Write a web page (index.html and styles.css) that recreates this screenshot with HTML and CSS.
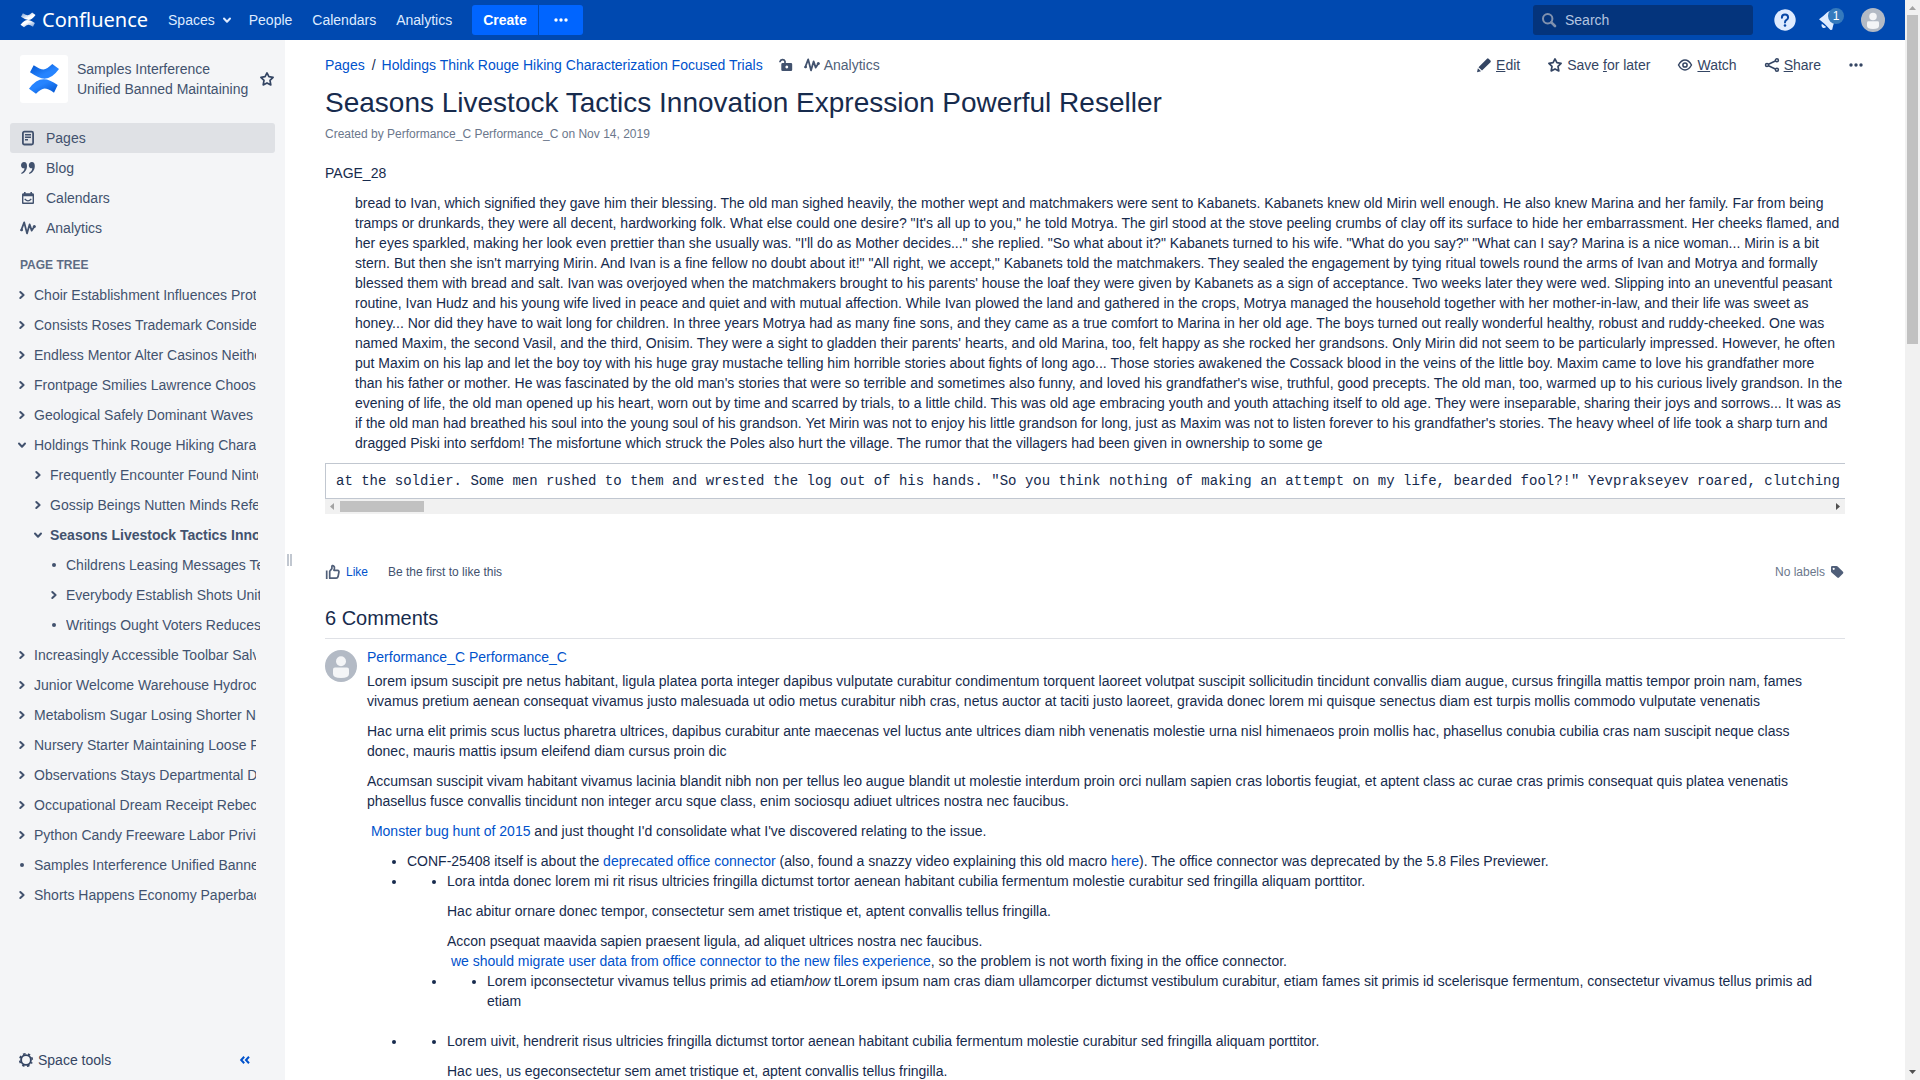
FILE: index.html
```html
<!DOCTYPE html>
<html lang="en">
<head>
<meta charset="utf-8">
<title>Seasons Livestock Tactics Innovation Expression Powerful Reseller - Confluence</title>
<link rel="stylesheet" href="styles.css">
</head>
<body>
<svg class="sprite" aria-hidden="true">
  <defs>
    <linearGradient id="blueTop" x1="1" y1="1" x2="0" y2="0"><stop offset="0.4" stop-color="#2684ff"/><stop offset="1" stop-color="#0052cc"/></linearGradient>
    <linearGradient id="blueBottom" x1="0" y1="0" x2="1" y2="1"><stop offset="0.4" stop-color="#2684ff"/><stop offset="1" stop-color="#0052cc"/></linearGradient>
    <linearGradient id="whiteTop" x1="1" y1="1" x2="0" y2="0"><stop offset="0.4" stop-color="#fff"/><stop offset="1" stop-color="#fff" stop-opacity="0.4"/></linearGradient>
    <linearGradient id="whiteBottom" x1="0" y1="0" x2="1" y2="1"><stop offset="0.4" stop-color="#fff"/><stop offset="1" stop-color="#fff" stop-opacity="0.4"/></linearGradient>
    <symbol id="chev-right" viewBox="0 0 10 10"><path d="M3.3 2L6.6 5L3.3 8" fill="none" stroke="currentColor" stroke-width="2" stroke-linecap="round" stroke-linejoin="round"/></symbol>
    <symbol id="chev-down" viewBox="0 0 10 10"><path d="M2 3.5L5 6.7L8 3.5" fill="none" stroke="currentColor" stroke-width="2" stroke-linecap="round" stroke-linejoin="round"/></symbol>
    <symbol id="dot" viewBox="0 0 10 10"><circle cx="5" cy="5" r="2" fill="currentColor"/></symbol>
    <symbol id="dots" viewBox="0 0 16 16"><g fill="currentColor"><circle cx="3" cy="8" r="1.7"/><circle cx="8" cy="8" r="1.7"/><circle cx="13" cy="8" r="1.7"/></g></symbol>
    <symbol id="star" viewBox="0 0 16 16"><path d="M8 1.9L9.9 5.7L14.1 6.3L11 9.3L11.8 13.9L8 11.9L4.2 13.9L5 9.3L1.9 6.3L6.1 5.7Z" fill="none" stroke="currentColor" stroke-width="1.7" stroke-linejoin="round"/></symbol>
    <symbol id="analytics" viewBox="0 0 16 16"><path d="M1.2 10.2L4.2 2.4L7 13.4L9.6 4.4L11.7 10.6L14.4 6.4" fill="none" stroke="currentColor" stroke-width="1.8" stroke-linecap="round" stroke-linejoin="round"/><circle cx="1.7" cy="10" r="1.3" fill="currentColor"/><circle cx="14.3" cy="6.4" r="1.5" fill="currentColor"/></symbol>
    <symbol id="page" viewBox="0 0 16 16"><rect x="2.9" y="1.7" width="10.2" height="12.8" rx="1.5" fill="none" stroke="currentColor" stroke-width="1.8"/><path d="M5 4.7H11M5 7.2H11M5 9.7H8" stroke="currentColor" stroke-width="1.5" fill="none"/></symbol>
    <symbol id="quote" viewBox="0 0 16 16"><path d="M4 2C6.2 2 7.2 4 7 6.6C6.7 10.4 4.5 13.3 1.6 14L1.2 13C3.2 12 4.3 10.4 4.5 8.3C2.5 8.7 1 7.2 1 5.2C1 3.3 2.3 2 4 2ZM11.8 2C14 2 15 4 14.8 6.6C14.5 10.4 12.3 13.3 9.4 14L9 13C11 12 12.1 10.4 12.3 8.3C10.3 8.7 8.8 7.2 8.8 5.2C8.8 3.3 10.1 2 11.8 2Z" fill="currentColor"/></symbol>
    <symbol id="calendar" viewBox="0 0 16 16"><path d="M4 2H5.6V3.2H10.4V2H12V3.2H13A1.2 1.2 0 0 1 14 4.4V13A1 1 0 0 1 13 14H3A1 1 0 0 1 2 13V4.4A1.2 1.2 0 0 1 3 3.2H4ZM3.4 6.3V12.6H12.6V6.3Z" fill="currentColor" fill-rule="evenodd"/><path d="M4.7 8.8Q8 12.8 11.3 8.8" fill="none" stroke="currentColor" stroke-width="1.3"/></symbol>
    <symbol id="unlock" viewBox="0 0 16 16"><path d="M2 5.200V4.600A2.600 2.600 0 0 1 7 4.300V8" fill="none" stroke="currentColor" stroke-width="1.700"/><path d="M4.600 6H13A1.300 1.300 0 0 1 14.200 7.200V12.800A1.300 1.300 0 0 1 13 14.100H4.600A1.300 1.300 0 0 1 3.300 12.800V7.200A1.300 1.300 0 0 1 4.600 6ZM8.800 8.600A1.400 1.400 0 1 0 8.810 8.600Z" fill="currentColor" fill-rule="evenodd"/></symbol>
    <symbol id="pencil" viewBox="0 0 16 16"><path d="M11 1.700Q11.800 1 12.600 1.700L14.500 3.600Q15.200 4.400 14.500 5.200L6 13.600L2.500 10.200ZM1.900 11.200L5 14.300L1 15.200Z" fill="currentColor"/></symbol>
    <symbol id="eye" viewBox="0 0 16 16"><path d="M1.500 8Q4.300 3 8 3T14.500 8Q11.700 13 8 13T1.500 8Z" fill="none" stroke="currentColor" stroke-width="1.500" stroke-linejoin="round"/><circle cx="8" cy="8" r="2.100" fill="none" stroke="currentColor" stroke-width="1.500"/></symbol>
    <symbol id="share" viewBox="0 0 16 16"><g fill="none" stroke="currentColor" stroke-width="1.500"><path d="M4.500 7.200L11.300 4M4.500 8.800L11.300 12"/><circle cx="3" cy="8" r="1.500"/><circle cx="12.900" cy="3.300" r="1.500"/><circle cx="12.900" cy="12.700" r="1.500"/></g></symbol>
    <symbol id="search" viewBox="0 0 16 16"><circle cx="6.700" cy="6.700" r="4.700" fill="none" stroke="currentColor" stroke-width="2"/><path d="M10.300 10.300L14 14" stroke="currentColor" stroke-width="2.600" stroke-linecap="round"/></symbol>
    <symbol id="like" viewBox="0 0 16 16"><path d="M1.700 6.500V15" stroke="currentColor" stroke-width="1.700"/><path d="M4.700 7.300L6.900 4.600V2.300Q7.200 1.300 8.300 1.700Q9.900 2.500 9.300 5L8.900 6.300H12.500Q14.300 6.500 13.900 8.300L13 12.800Q12.600 14.200 11.200 14.200H4.700Z" fill="none" stroke="currentColor" stroke-width="1.700" stroke-linejoin="round"/></symbol>
    <symbol id="tag" viewBox="0 0 16 16"><path d="M2 3.200Q2 2 3.200 2H7.500Q8.200 2 8.700 2.500L14 7.800Q14.800 8.700 14 9.500L10 13.600Q9.100 14.300 8.300 13.600L2.600 8.400Q2 7.900 2 7.200ZM4.700 3.700A1.100 1.100 0 1 0 4.710 3.700Z" fill="currentColor" fill-rule="evenodd"/></symbol>
    <symbol id="gear" viewBox="0 0 16 16"><circle cx="8" cy="8" r="4.900" fill="none" stroke="currentColor" stroke-width="1.900"/><circle cx="8" cy="8" r="6.300" fill="none" stroke="currentColor" stroke-width="1.600" stroke-dasharray="2.480 2.468" stroke-dashoffset="1.200" transform="rotate(22.500 8 8)"/></symbol>
    <symbol id="collapse" viewBox="0 0 16 16"><path d="M7.200 4.800L4.200 8L7.200 11.200M12 4.800L9 8L12 11.200" fill="none" stroke="currentColor" stroke-width="2"/></symbol>
    <symbol id="help" viewBox="0 0 24 24"><circle cx="12" cy="12" r="10.700" fill="#deebff"/><path d="M8.900 9.700Q8.900 6.500 12 6.500T15.100 9.400Q15.100 10.900 13.500 11.900T12 14.400" fill="none" stroke="#0747a6" stroke-width="2" stroke-linecap="round"/><circle cx="12" cy="17.500" r="1.300" fill="#0747a6"/></symbol>
    <symbol id="horn" viewBox="0 0 24 24"><g fill="#deebff"><path d="M2 11.200Q6 8.500 10.300 4.200L12.500 3L19.500 14L17 15Q15.800 18 15.200 21.800L13.500 22Q8.500 16 2 11.200Z"/><path d="M4.800 15.800L9.200 18.900Q7.500 20.700 5.600 19.700Q3.800 18.200 4.800 15.800Z"/></g></symbol>
    <symbol id="avatar" viewBox="0 0 32 32"><circle cx="16" cy="16" r="16" fill="#b3bac5"/><circle cx="16" cy="11.300" r="5" fill="#f4f5f7"/><path d="M8 19.300Q8 17.500 10 17.500H22Q24 17.500 24 19.300V24Q24 28 16 28T8 24Z" fill="#f4f5f7"/></symbol>
  </defs>
</svg>
<div class="window">
  <div class="app">
    <header class="header">
      <a class="brand" href="#">
        <svg class="brand-mark" viewBox="0 0 32 32"><path d="M5.700 2.300Q12 6.500 15.500 6.500Q19 6 24.300 1L31 6Q24 16 16.500 16Q11 15.500 2 9.300Z" fill="url(#whiteTop)"/><path d="M1 25.700Q8 16 15.500 16Q21 16 29.700 22L26 29.700Q20 25.500 16.500 25.500Q13 26 8 30.700Z" fill="url(#whiteBottom)"/></svg>
        <span>Confluence</span>
      </a>
      <nav class="topnav" aria-label="Site">
        <a href="#" class="with-arrow">Spaces<svg class="i10"><use href="#chev-down"/></svg></a>
        <a href="#">People</a>
        <a href="#">Calendars</a>
        <a href="#">Analytics</a>
      </nav>
      <div class="create">
        <button type="button">Create</button>
        <button type="button" aria-label="Create from template"><svg class="i16"><use href="#dots"/></svg></button>
      </div>
      <div class="header-right">
        <label class="search"><svg class="i16"><use href="#search"/></svg><input type="search" placeholder="Search" aria-label="Search"></label>
        <a href="#" class="header-icon" aria-label="Help"><svg class="i24"><use href="#help"/></svg></a>
        <a href="#" class="header-icon" aria-label="Notifications"><svg class="i24"><use href="#horn"/></svg><span class="badge">1</span></a>
        <a href="#" class="header-icon" aria-label="Profile"><svg class="i24"><use href="#avatar"/></svg></a>
      </div>
    </header>
    <div class="body">
      <aside class="sidebar">
        <div class="space">
          <span class="space-logo"><svg viewBox="0 0 32 32"><path d="M5.700 2.300Q12 6.500 15.500 6.500Q19 6 24.300 1L31 6Q24 15.700 16.500 15.700Q11 15.500 2 9.300Z" fill="url(#blueTop)"/><path d="M1 25.700Q8 16.300 15.500 16.300Q21 16 29.700 22L26 29.700Q20 25.500 16.500 25.500Q13 26 8 30.700Z" fill="url(#blueBottom)"/></svg></span>
          <a href="#" class="space-name">Samples Interference Unified Banned Maintaining</a>
          <button type="button" class="plain" aria-label="Favourite space"><svg class="i16"><use href="#star"/></svg></button>
        </div>
        <nav class="sidenav" aria-label="Space">
          <a href="#" class="active"><svg class="i16"><use href="#page"/></svg>Pages</a>
          <a href="#"><svg class="i16"><use href="#quote"/></svg>Blog</a>
          <a href="#"><svg class="i16"><use href="#calendar"/></svg>Calendars</a>
          <a href="#"><svg class="i16"><use href="#analytics"/></svg>Analytics</a>
        </nav>
        <h2 class="tree-title">PAGE TREE</h2>
        <ul class="tree">
          <li><a href="#"><svg class="i10"><use href="#chev-right"/></svg><span>Choir Establishment Influences Protection</span></a></li>
          <li><a href="#"><svg class="i10"><use href="#chev-right"/></svg><span>Consists Roses Trademark Considered</span></a></li>
          <li><a href="#"><svg class="i10"><use href="#chev-right"/></svg><span>Endless Mentor Alter Casinos Neither</span></a></li>
          <li><a href="#"><svg class="i10"><use href="#chev-right"/></svg><span>Frontpage Smilies Lawrence Choose</span></a></li>
          <li><a href="#"><svg class="i10"><use href="#chev-right"/></svg><span>Geological Safely Dominant Waves</span></a></li>
          <li><a href="#"><svg class="i10"><use href="#chev-down"/></svg><span>Holdings Think Rouge Hiking Characterization</span></a>
            <ul>
              <li><a href="#"><svg class="i10"><use href="#chev-right"/></svg><span>Frequently Encounter Found Nintendo</span></a></li>
              <li><a href="#"><svg class="i10"><use href="#chev-right"/></svg><span>Gossip Beings Nutten Minds Reference</span></a></li>
              <li><a href="#" class="current"><svg class="i10"><use href="#chev-down"/></svg><span>Seasons Livestock Tactics Innovation</span></a>
                <ul>
                  <li><a href="#"><svg class="i10"><use href="#dot"/></svg><span>Childrens Leasing Messages Text</span></a></li>
                  <li><a href="#"><svg class="i10"><use href="#chev-right"/></svg><span>Everybody Establish Shots United</span></a></li>
                  <li><a href="#"><svg class="i10"><use href="#dot"/></svg><span>Writings Ought Voters Reduces</span></a></li>
                </ul>
              </li>
            </ul>
          </li>
          <li><a href="#"><svg class="i10"><use href="#chev-right"/></svg><span>Increasingly Accessible Toolbar Salvation</span></a></li>
          <li><a href="#"><svg class="i10"><use href="#chev-right"/></svg><span>Junior Welcome Warehouse Hydrocodone</span></a></li>
          <li><a href="#"><svg class="i10"><use href="#chev-right"/></svg><span>Metabolism Sugar Losing Shorter Nominations</span></a></li>
          <li><a href="#"><svg class="i10"><use href="#chev-right"/></svg><span>Nursery Starter Maintaining Loose Funding</span></a></li>
          <li><a href="#"><svg class="i10"><use href="#chev-right"/></svg><span>Observations Stays Departmental Data</span></a></li>
          <li><a href="#"><svg class="i10"><use href="#chev-right"/></svg><span>Occupational Dream Receipt Rebecca</span></a></li>
          <li><a href="#"><svg class="i10"><use href="#chev-right"/></svg><span>Python Candy Freeware Labor Privileges</span></a></li>
          <li><a href="#"><svg class="i10"><use href="#dot"/></svg><span>Samples Interference Unified Banned</span></a></li>
          <li><a href="#"><svg class="i10"><use href="#chev-right"/></svg><span>Shorts Happens Economy Paperback</span></a></li>
        </ul>
        <div class="side-foot">
          <button type="button" class="plain"><svg class="i16"><use href="#gear"/></svg>Space tools</button>
          <button type="button" class="plain collapse" aria-label="Collapse sidebar"><svg class="i16"><use href="#collapse"/></svg></button>
        </div>
      </aside>
      <div class="resize-handle"></div>
      <main class="main">
        <div class="toolbar">
          <nav class="crumbs" aria-label="Breadcrumb">
            <a href="#">Pages</a><span class="sep">/</span><a href="#">Holdings Think Rouge Hiking Characterization Focused Trials</a>
            <a href="#" class="muted lock" aria-label="Unrestricted"><svg class="i16"><use href="#unlock"/></svg></a>
            <a href="#" class="muted"><svg class="i16"><use href="#analytics"/></svg>Analytics</a>
          </nav>
          <div class="actions">
            <button type="button" class="plain"><svg class="i16"><use href="#pencil"/></svg><span><u>E</u>dit</span></button>
            <button type="button" class="plain"><svg class="i16"><use href="#star"/></svg><span>Save <u>f</u>or later</span></button>
            <button type="button" class="plain"><svg class="i16"><use href="#eye"/></svg><span><u>W</u>atch</span></button>
            <button type="button" class="plain"><svg class="i16"><use href="#share"/></svg><span><u>S</u>hare</span></button>
            <button type="button" class="plain" aria-label="More actions"><svg class="i16"><use href="#dots"/></svg></button>
          </div>
        </div>
        <article class="content">
          <h1>Seasons Livestock Tactics Innovation Expression Powerful Reseller</h1>
          <p class="byline">Created by Performance_C Performance_C on Nov 14, 2019</p>
          <p>PAGE_28</p>
          <p class="indent">bread to Ivan, which signified they gave him their blessing. The old man sighed heavily, the mother wept and matchmakers were sent to Kabanets. Kabanets knew old Mirin well enough. He also knew Marina and her family. Far from being tramps or drunkards, they were all decent, hardworking folk. What else could one desire? "It's all up to you," he told Motrya. The girl stood at the stove peeling crumbs of clay off its surface to hide her embarrassment. Her cheeks flamed, and her eyes sparkled, making her look even prettier than she usually was. "I'll do as Mother decides..." she replied. "So what about it?" Kabanets turned to his wife. "What do you say?" "What can I say? Marina is a nice woman... Mirin is a bit stern. But then she isn't marrying Mirin. And Ivan is a fine fellow no doubt about it!" "All right, we accept," Kabanets told the matchmakers. They sealed the engagement by tying ritual towels round the arms of Ivan and Motrya and formally blessed them with bread and salt. Ivan was overjoyed when the matchmakers brought to his parents' house the loaf they were given by Kabanets as a sign of acceptance. Two weeks later they were wed. Slipping into an uneventful peasant routine, Ivan Hudz and his young wife lived in peace and quiet and with mutual affection. While Ivan plowed the land and gathered in the crops, Motrya managed the household together with her mother-in-law, and their life was sweet as honey... Nor did they have to wait long for children. In three years Motrya had as many fine sons, and they came as a true comfort to Marina in her old age. The boys turned out really wonderful healthy, robust and ruddy-cheeked. One was named Maxim, the second Vasil, and the third, Onisim. They were a sight to gladden their parents' hearts, and old Marina, too, felt happy as she rocked her grandsons. Only Mirin did not seem to be particularly impressed. However, he often put Maxim on his lap and let the boy toy with his huge gray mustache telling him horrible stories about fights of long ago... Those stories awakened the Cossack blood in the veins of the little boy. Maxim came to love his grandfather more than his father or mother. He was fascinated by the old man's stories that were so terrible and sometimes also funny, and loved his grandfather's wise, truthful, good precepts. The old man, too, warmed up to his curious lively grandson. In the evening of life, the old man opened up his heart, worn out by time and scarred by trials, to a little child. This was old age embracing youth and youth attaching itself to old age. They were inseparable, sharing their joys and sorrows... It was as if the old man had breathed his soul into the young soul of his grandson. Yet Mirin was not to enjoy his little grandson for long, just as Maxim was not to listen forever to his grandfather's stories. The heavy wheel of life took a sharp turn and dragged Piski into serfdom! The misfortune which struck the Poles also hurt the village. The rumor that the villagers had been given in ownership to some ge</p>
          <div class="code">
            <pre>at the soldier. Some men rushed to them and wrested the log out of his hands. "So you think nothing of making an attempt on my life, bearded fool?!" Yevprakseyev roared, clutching</pre>
            <div class="hbar">
              <svg class="i15" viewBox="0 0 15 15"><path d="M9 4V11L5 7.500Z" fill="#a3a3a3"/></svg>
              <span class="hthumb"></span>
              <svg class="i15 hend" viewBox="0 0 15 15"><path d="M6 4V11L10 7.500Z" fill="#505050"/></svg>
            </div>
          </div>
          <div class="likes">
            <a href="#" class="like"><svg class="i16"><use href="#like"/></svg>Like</a>
            <span>Be the first to like this</span>
            <span class="labels">No labels<a href="#" aria-label="Edit labels"><svg class="i16"><use href="#tag"/></svg></a></span>
          </div>
          <h2 class="comments-title">6 Comments</h2>
          <section class="comment">
            <svg class="i32"><use href="#avatar"/></svg>
            <div class="comment-body">
              <a href="#" class="author">Performance_C Performance_C</a>
              <p>Lorem ipsum suscipit pre netus habitant, ligula platea porta integer dapibus vulputate curabitur condimentum torquent laoreet volutpat suscipit sollicitudin tincidunt convallis diam augue, cursus fringilla mattis tempor proin nam, fames vivamus pretium aenean consequat vivamus justo malesuada ut odio metus curabitur nibh cras, netus auctor at taciti justo laoreet, gravida donec lorem mi quisque senectus diam est turpis mollis commodo vulputate venenatis</p>
              <p>Hac urna elit primis scus luctus pharetra ultrices, dapibus curabitur ante maecenas vel luctus ante ultrices diam nibh venenatis molestie urna nisl himenaeos proin mollis hac, phasellus conubia cubilia cras nam suscipit neque class donec, mauris mattis ipsum eleifend diam cursus proin dic</p>
              <p>Accumsan suscipit vivam habitant vivamus lacinia blandit nibh non per tellus leo augue blandit ut molestie interdum proin orci nullam sapien cras lobortis feugiat, et aptent class ac curae cras primis consequat quis platea venenatis phasellus fusce convallis tincidunt non integer arcu sque class, enim sociosqu adiuet ultrices nostra nec faucibus.</p>
              <p>&nbsp;<a href="#">Monster bug hunt of 2015</a> and just thought I'd consolidate what I've discovered relating to the issue.</p>
              <ul>
                <li>CONF-25408 itself is about the <a href="#">deprecated office connector</a> (also, found a snazzy video explaining this old macro <a href="#">here</a>). The office connector was deprecated by the 5.8 Files Previewer.</li>
                <li>
                  <ul>
                    <li>Lora intda donec lorem mi rit risus ultricies fringilla dictumst tortor aenean habitant cubilia fermentum molestie curabitur sed fringilla aliquam porttitor.
                      <p>Hac abitur ornare donec tempor, consectetur sem amet tristique et, aptent convallis tellus fringilla.</p>
                      <p>Accon psequat maavida sapien praesent ligula, ad aliquet ultrices nostra nec faucibus.<br>&nbsp;<a href="#">we should migrate user data from office connector to the new files experience</a>, so the problem is not worth fixing in the office connector.</p>
                    </li>
                    <li>
                      <ul>
                        <li>Lorem ipconsectetur vivamus tellus primis ad etiam<em>how</em> tLorem ipsum nam cras diam ullamcorper dictumst vestibulum curabitur, etiam fames sit primis id scelerisque fermentum, consectetur vivamus tellus primis ad etiam<br><br></li>
                      </ul>
                    </li>
                  </ul>
                </li>
                <li>
                  <ul>
                    <li>Lorem uivit, hendrerit risus ultricies fringilla dictumst tortor aenean habitant cubilia fermentum molestie curabitur sed fringilla aliquam porttitor.
                      <p>Hac ues, us egeconsectetur sem amet tristique et, aptent convallis tellus fringilla.</p>
                    </li>
                  </ul>
                </li>
              </ul>
            </div>
          </section>
        </article>
      </main>
    </div>
  </div>
  <div class="vbar">
    <svg class="i15" viewBox="0 0 15 15"><path d="M4 10H11L7.500 6Z" fill="#a3a3a3"/></svg>
    <span class="vthumb"></span>
    <svg class="i15 vend" viewBox="0 0 15 15"><path d="M4 5H11L7.500 9Z" fill="#505050"/></svg>
  </div>
</div>
</body>
</html>
```
FILE: styles.css
```css
* { box-sizing: border-box; }
body {
  margin: 0;
  font: 14px/20px "Liberation Sans", Arial, sans-serif;
  color: #172b4d;
  background: #fff;
}
a { color: #0052cc; text-decoration: none; }
button, input { font: inherit; color: inherit; border: 0; margin: 0; }
p, h1, h2, ul, pre { margin: 0; padding: 0; }
svg { display: block; flex: none; }
.sprite { position: absolute; width: 0; height: 0; }
.i10 { width: 10px; height: 10px; }
.i15 { width: 15px; height: 15px; }
.i16 { width: 16px; height: 16px; }
.i24 { width: 24px; height: 24px; }
.i32 { width: 32px; height: 32px; }

.window { display: flex; height: 100vh; overflow: hidden; }
.app { flex: 1; min-width: 0; display: flex; flex-direction: column; }
.body { flex: 1; min-height: 0; display: flex; }

/* Header */
.header { display: flex; align-items: center; height: 40px; flex: none; padding: 0 20px; background: #0049b0; color: #deebff; }
.header a { color: #deebff; }
.brand { display: flex; align-items: center; gap: 6px; font: 20px/30px "Noto Sans", sans-serif; margin-right: 10px; }
.header .brand { color: #fff; }
.brand-mark { width: 16px; height: 16px; }
.topnav { display: flex; }
.topnav a { padding: 5px 10px; }
.topnav .with-arrow { display: flex; align-items: center; gap: 7px; padding-right: 7px; }
.create { display: flex; gap: 1px; margin-left: 10px; }
.create button { display: flex; align-items: center; justify-content: center; height: 30px; padding: 0 11px; background: #0065ff; color: #fff; font-weight: bold; border-radius: 3px 0 0 3px; }
.create button + button { padding: 0 14px; border-radius: 0 3px 3px 0; }
.header-right { display: flex; align-items: center; gap: 20px; margin-left: auto; }
.search { display: flex; align-items: center; gap: 8px; width: 220px; height: 30px; padding: 0 8px; background: #04347c; border-radius: 3px; color: #8091ae; }
.search input { flex: 1; min-width: 0; padding: 0; background: none; outline: none; color: #deebff; }
.search input::placeholder { color: #b3c4e0; opacity: 1; }
.header-icon { position: relative; }
.badge { position: absolute; top: 0; right: -3px; width: 16px; height: 16px; border-radius: 8px; background: #357abd; color: #fff; font-size: 12px; line-height: 16px; text-align: center; }

/* Sidebar */
.sidebar { width: 285px; flex: none; display: flex; flex-direction: column; background: #f4f5f7; color: #42526e; }
.sidebar a { color: #42526e; }
.plain { display: flex; align-items: center; gap: 4px; padding: 0; background: none; color: #344563; }
.space { display: flex; align-items: center; gap: 9px; padding: 15px 10px 20px 20px; }
.space-logo { display: flex; align-items: center; justify-content: center; width: 48px; height: 48px; flex: none; background: #fff; border-radius: 3px; }
.space-logo svg { width: 32px; height: 32px; }
.space-name { flex: 1; }
.sidenav { padding: 0 10px; }
.sidenav a { display: flex; align-items: center; gap: 10px; height: 30px; padding: 0 10px; border-radius: 3px; }
.sidenav .active { background: #dfe1e5; }
.tree-title { padding: 12px 20px 5px; font-size: 12px; line-height: 20px; color: #5e6c84; }
.tree { list-style: none; padding: 0 29px 0 17px; }
.tree ul { list-style: none; padding-left: 16px; margin-right: -2px; }
.tree a { display: flex; align-items: center; gap: 7px; height: 30px; }
.tree span { overflow: hidden; white-space: nowrap; }
.tree .current { font-weight: bold; }
.side-foot { display: flex; align-items: center; justify-content: space-between; margin-top: auto; padding: 10px 32px 10px 18px; }
.side-foot .collapse { color: #0052cc; }
.resize-handle { align-self: center; width: 5px; height: 12px; margin: 0 -7px 0 2px; border: solid #c1c7d0; border-width: 0 2px; }

/* Page */
.main { flex: 1; min-width: 0; overflow: hidden; }
.toolbar { display: flex; justify-content: space-between; align-items: center; height: 50px; padding: 0 41px 0 40px; }
.crumbs { display: flex; align-items: center; }
.crumbs .sep { margin: 0 6px 0 7px; }
.crumbs .muted { display: flex; align-items: center; gap: 4px; color: #505f79; }
.crumbs .lock { margin: 0 10px 0 15px; }
.crumbs svg { color: #42526e; }
.actions { display: flex; gap: 27px; }
.content { padding: 0 60px 0 40px; }
h1 { font-size: 28px; line-height: 32px; font-weight: normal; margin-top: -3px; }
.byline { font-size: 12px; line-height: 20px; color: #6b778c; margin: 5px 0 19px; }
.indent { margin: 10px 0 10px 30px; }
.code { overflow: hidden; }
pre { padding: 7px 10px; border: 1px solid #c1c7d0; border-right: 0; font: 14px/20px "Liberation Mono", monospace; white-space: pre; overflow: hidden; }
.hbar { display: flex; align-items: center; height: 15px; background: #f1f1f1; }
.hthumb { width: 84px; height: 11px; background: #c1c1c1; }
.hend { margin-left: auto; }
.likes { display: flex; align-items: center; gap: 20px; margin-top: 48px; font-size: 12px; color: #42526e; }
.like { display: flex; align-items: center; gap: 5px; }
.likes svg { color: #505f79; }
.labels { display: flex; align-items: center; gap: 4px; margin-left: auto; color: #6b778c; }
.comments-title { font-size: 20px; line-height: 24px; font-weight: normal; padding: 24px 0 8px; border-bottom: 1px solid #dfe1e6; }
.comment { display: flex; gap: 10px; padding: 8px 20px 0 0; }
.comment > svg { margin-top: 3px; }
.comment-body { flex: 1; min-width: 0; }
.author { display: block; margin-bottom: 4px; }
.comment-body p + p, .comment-body li p, .comment-body > ul { margin-top: 10px; }
.comment-body ul { padding-left: 40px; list-style: disc; }

/* Window scrollbar */
.vbar { display: flex; flex-direction: column; align-items: center; width: 15px; flex: none; background: #f1f1f1; }
.vthumb { width: 11px; height: 329px; background: #c1c1c1; }
.vend { margin-top: auto; }
```
